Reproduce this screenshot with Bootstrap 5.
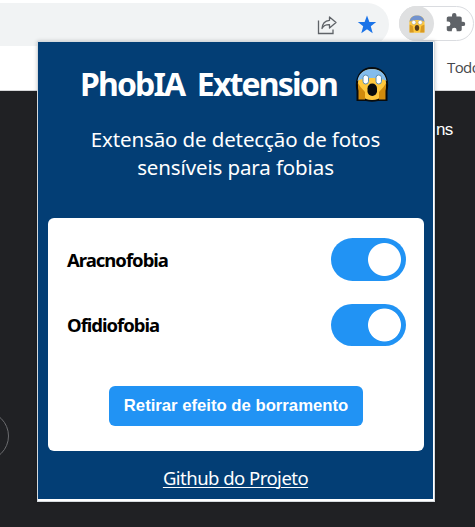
<!DOCTYPE html>
<html lang="pt-BR">
<head>
<meta charset="utf-8">
<meta name="viewport" content="width=device-width, initial-scale=1">
<title>PhobIA Extension</title>
<link href="https://cdn.jsdelivr.net/npm/bootstrap@5.3.0/dist/css/bootstrap.min.css" rel="stylesheet">
<style>
body{width:475px;height:527px;background:#202124;font-family:"Liberation Sans",Arial,sans-serif}
.browser-bar{height:46px;padding-top:3px}
.address{width:389px;height:43px;background:#f1f3f4;border-radius:0 22px 22px 0;padding:12px 12px 0 0;gap:19px}
.ext-pill{width:75px;height:35px;margin:3px 0 0 10px;border:1px solid #dadce0;border-radius:18px}
.ext-active{width:35px;height:35px;margin:-1px 0 0 -1px;background:#dfe0e1}
.puzzle{margin:4px 0 0 11px}
.bookmarks{height:45px;border-bottom:1px solid #d6d7d9;padding:10px 0 0 447px;font:15px/22px "Open Sans",sans-serif;letter-spacing:-.6px;color:#45484c;white-space:nowrap}
.page-area{height:436px}
.page-word{padding:29px 0 0 436px;font-size:17px;line-height:20px;letter-spacing:-.8px}
.round-btn{width:50px;height:50px;border:1px solid #6b6c6f;margin:271px 0 0 -41px}
.popup{left:37px;top:41px;width:398px;height:461px;border:1px solid #d5dade;box-shadow:0 0 4px #0003}
.popup-body{width:395px;height:457px;background:#033e75;font-family:"Comic Sans MS","Noto Sans",sans-serif}
.popup-title{font-size:32px;line-height:44px;letter-spacing:-1.85px;word-spacing:6px;padding:20px 0 0 42px;height:83px;gap:17px}
.popup-sub{font-size:20.5px;line-height:28px;height:93px;letter-spacing:-.12px}
.options{width:376px;height:233px;border-radius:6px;margin-left:10px;padding:20px 18px 0 19px}
.option-row{height:43px;margin-bottom:23px;font-size:18.5px;letter-spacing:-1px}
.option-row.second{height:42px}
.toggle-switch.form-check-input{width:75px;height:100%;margin:0;border:0;border-radius:22px;box-shadow:none;background:radial-gradient(circle at 53.5px 50%,#fff 16px,#2193f4 16.9px)}
.blur-btn.btn{width:254px;height:40px;margin:17px 0 0 42px;border:0;border-radius:6px;background:#2193f4;padding:0;font:bold 16.7px/38px "Liberation Sans",Arial,sans-serif;color:#fff;white-space:nowrap}
.repo-link{font-size:18.5px;line-height:26px;margin-top:14px;letter-spacing:-.52px;text-decoration-thickness:1px;text-underline-offset:2px}
svg{flex:none;display:block}
</style>
<script src="https://cdn.jsdelivr.net/npm/bootstrap@5.3.0/dist/js/bootstrap.bundle.min.js"></script>
</head>
<body class="overflow-hidden position-relative">
<svg width="0" height="0" class="position-absolute"><defs>
<symbol id="scream" viewBox="0 0 36 36">
<path d="M2.500 35V25C-.5 11 7 1 18 1S36.500 11 33.500 25V35H24Q18 36.500 12 35Z" fill="#080b0d"/>
<path d="M4 17C4 8 10 3 18 3S32 8 32 17C32 28 27 34 18 34S4 28 4 17" fill="#ffc83d"/>
<path d="M3.500 15C4.500 7 11 3 18 3S31.500 7 32.500 15C27 11 9 11 3.500 15" fill="#83bced"/>
<path d="M3.800 17 6.500 21 11 26V33.500H4.500V25ZM32.200 17 29.500 21 25 26V33.500H31.500V25Z" fill="#d18b0d"/>
<g fill="#fff" stroke="#5b8cae" stroke-width="1"><rect x="9" y="9" width="5.500" height="9" rx="2.700"/><rect x="22" y="9" width="5.500" height="9" rx="2.700"/></g>
<rect x="13.500" y="17.500" width="9.500" height="12.500" rx="4.700" fill="#080b0d"/>
</symbol></defs></svg>

<header class="browser-bar bg-white d-flex">
  <div class="address d-flex justify-content-end">
    <svg width="21" height="21" viewBox="0 0 21 21" fill="none" stroke="#5f6368" stroke-width="1.300"><path d="M1.500 5.500V18.500H16V14.500"/><path d="M12.500 2 19 7.600 12.500 13V9.700C8.500 9.500 6.300 11 5 13.500 5.300 8.800 8 5.800 12.500 5.300Z" stroke-linejoin="round"/></svg>
    <svg width="20" height="20" viewBox="0 0 20 20" fill="#1a73e8"><path d="M10 .5 12.400 7H19.200L13.800 11.300 15.700 18.200 10 14.200 4.300 18.200 6.200 11.300.8 7H7.600Z"/></svg>
  </div>
  <div class="ext-pill d-flex">
    <div class="ext-active rounded-circle d-flex align-items-center justify-content-center"><svg width="18" height="18" viewBox="1 1 34 34"><path d="M4 34V20C2 8 8 2 18 2S34 8 32 20V34H25Q18 35 11 34Z" fill="#ffc83d"/><path d="M4 14C5 5 11 2 18 2S31 5 32 14C27 9 9 9 4 14" fill="#7293cf"/><path d="M4 19 10 22 12 34H4ZM32 19 26 22 24 34H32Z" fill="#d99a22"/><g fill="#fff" stroke="#9b9b8a"><circle cx="12" cy="15" r="4"/><circle cx="24" cy="15" r="4"/></g><rect x="14" y="20" width="8" height="11" rx="4" fill="#553a18"/></svg></div>
    <svg class="puzzle" width="24" height="24" viewBox="0 0 24 24" fill="#5f6368"><path d="M20.500 11H19V7c0-1.100-.9-2-2-2h-4V3.500a2.500 2.500 0 0 0-5 0V5H4c-1.100 0-2 .9-2 2v3.800h1.500a2.700 2.700 0 0 1 0 5.400H2V20c0 1.100.9 2 2 2h3.800v-1.500a2.700 2.700 0 0 1 5.400 0V22H17c1.100 0 2-.9 2-2v-4h1.500a2.500 2.500 0 0 0 0-5Z" transform="translate(0 1) scale(.88)"/></svg>
  </div>
</header>
<div class="bookmarks bg-white">Todo</div>
<main class="page-area text-white">
  <div class="page-word">ns</div>
  <div class="round-btn rounded-circle"></div>
</main>

<section class="popup position-absolute bg-white">
  <div class="popup-body text-white">
    <h1 class="popup-title d-flex fw-bold m-0 text-nowrap"><span>PhobIA Extension</span><svg width="36" height="36" class="mt-1"><use href="#scream"/></svg></h1>
    <p class="popup-sub text-center m-0">Extensão de detecção de fotos<br>sensíveis para fobias</p>
    <div class="options bg-white text-black">
      <div class="option-row d-flex align-items-center justify-content-between fw-bold"><label for="spider">Aracnofobia</label><input id="spider" class="toggle-switch form-check-input" type="checkbox" checked></div>
      <div class="option-row second d-flex align-items-center justify-content-between fw-bold"><label for="snake">Ofidiofobia</label><input id="snake" class="toggle-switch form-check-input" type="checkbox" checked></div>
      <button class="blur-btn btn" type="button">Retirar efeito de borramento</button>
    </div>
    <div class="text-center"><a href="#" class="repo-link d-inline-block text-white">Github do Projeto</a></div>
  </div>
</section>
</body>
</html>
